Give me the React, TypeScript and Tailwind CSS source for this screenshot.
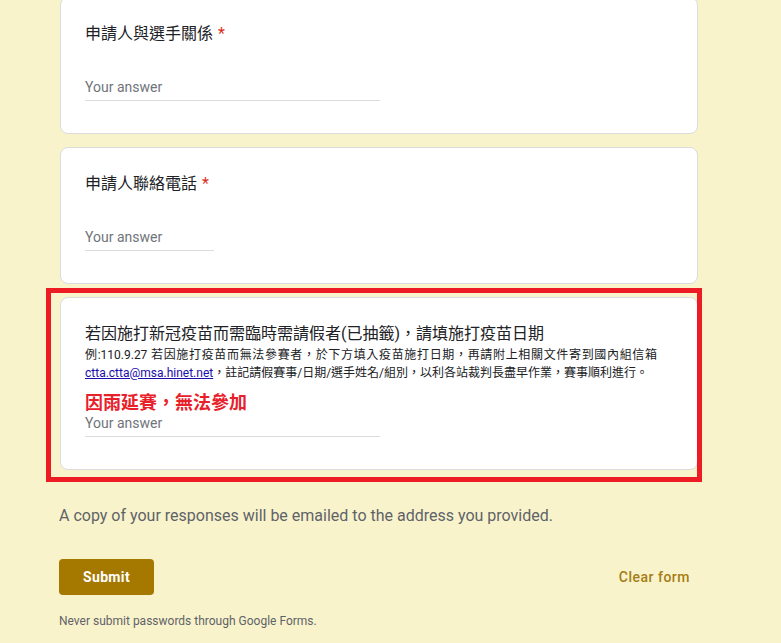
const font = { fontFamily: 'Roboto, "Noto Sans CJK TC", "Liberation Sans", sans-serif' };

interface QuestionProps {
  title: string;
  required?: boolean;
  lineWidth: string;
  children?: React.ReactNode;
}

const AnswerLine = ({ lineWidth }: { lineWidth: string }) => (
  <div className={`${lineWidth} border-b border-[#dadce0] pb-[3px] text-[14px] leading-5 text-[#70757a]`}>
    Your answer
  </div>
);

const Question = ({ title, required, lineWidth, children }: QuestionProps) => (
  <div className="rounded-lg border border-[#dadce0] bg-white px-6 pt-6 pb-[32px]">
    <div className="text-[16px] leading-6 text-[#202124]">
      {title}
      {required && <span className="ml-[5px] text-[#d93025]">*</span>}
    </div>
    {children ? children : <div className="mt-[31px]"><AnswerLine lineWidth={lineWidth} /></div>}
  </div>
);

export default function App() {
  return (
    <div className="min-h-screen w-full overflow-hidden bg-[#f9f3cc]" style={font}>
      <div className="ml-[60px] w-[638px] -mt-[3px] flex flex-col gap-[13px]">
        <Question title="申請人與選手關係" required lineWidth="w-[295px]" />
        <Question title="申請人聯絡電話" required lineWidth="w-[129px]" />
        <div className="relative">
          <Question title="若因施打新冠疫苗而需臨時需請假者(已抽籤)，請填施打疫苗日期" lineWidth="w-[295px]">
            <div className="pr-[16px] text-justify text-[12px] leading-[18px] text-[#202124]">
              例:110.9.27 若因施打疫苗而無法參賽者，於下方填入疫苗施打日期，再請附上相關文件寄到國內組信箱
              <a href="#" className="text-[#1a0dab] underline">ctta.ctta@msa.hinet.net</a>
              ，註記請假賽事/日期/選手姓名/組別，以利各站裁判長盡早作業，賽事順利進行。
            </div>
            <div className="mt-[11px] text-[18px] leading-5 font-bold text-[#e8202a]">因雨延賽，無法參加</div>
            <AnswerLine lineWidth="w-[295px]" />
          </Question>
          {/* annotation frame drawn over the screenshot */}
          <div className="pointer-events-none absolute -left-[14px] -top-[9px] -right-[4px] -bottom-[12px] border-[5px] border-[#ed1c24]" />
        </div>
      </div>

      <div className="ml-[59px] w-[639px] mt-[34px]">
        <div className="text-[16px] leading-6 text-[#5f6368]">
          A copy of your responses will be emailed to the address you provided.
        </div>
        <div className="mt-[31px] flex items-center justify-between">
          <button className="h-9 w-[95px] rounded bg-[#a57800] text-[14px] font-bold tracking-wide text-white">
            Submit
          </button>
          <button className="mr-[8px] text-[14px] font-medium tracking-[0.5px] text-[#a67c14]">Clear form</button>
        </div>
        <div className="mt-[18px] text-[12px] leading-4 text-[#5f6368]">
          Never submit passwords through Google Forms.
        </div>
      </div>
    </div>
  );
}
